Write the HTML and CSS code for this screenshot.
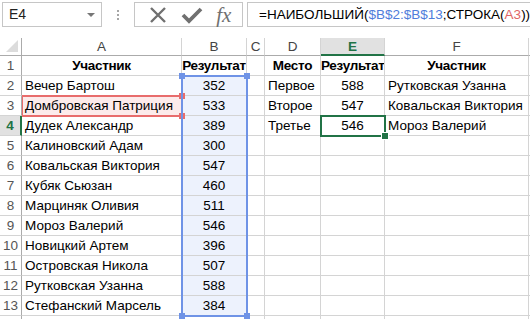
FILE: index.html
```html
<!DOCTYPE html>
<html lang="ru">
<head>
<meta charset="UTF-8">
<link rel="stylesheet" href="styles.css">
<title>Лист</title>
</head>
<body>
<div class="toolbar">
  <div class="namebox">E4<span class="arrow"></span></div>
  <div class="grip"><i></i><i></i><i></i></div>
  <div class="fbuttons">
    <svg width="20" height="20" viewBox="0 0 20 20"><path d="M3 3 L17 17 M17 3 L3 17" stroke="#707070" stroke-width="2.4" fill="none"/></svg>
    <svg width="22" height="20" viewBox="0 0 22 20"><path d="M2 10 L8 16 L20 4" stroke="#707070" stroke-width="3.8" fill="none"/></svg>
    <span class="fx">fx</span>
  </div>
  <div class="formula">=НАИБОЛЬШИЙ(<span class="ref-b">$B$2:$B$13</span>;СТРОКА(<span class="ref-r">A3</span>))</div>
</div>

<div class="sheet">
  <div class="corner"><span class="tri"></span></div>
  <div class="ch">A</div><div class="ch">B</div><div class="ch">C</div><div class="ch">D</div><div class="ch active">E</div><div class="ch">F</div><div class="ch"></div>

  <div class="rh">1</div><div class="c b ctr">Участник</div><div class="c b ctr">Результат</div><div class="c"></div><div class="c b ctr">Место</div><div class="c b ctr">Результат</div><div class="c b ctr">Участник</div><div class="c"></div>
  <div class="rh">2</div><div class="c">Вечер Бартош</div><div class="c ctr blue">352</div><div class="c"></div><div class="c">Первое</div><div class="c ctr">588</div><div class="c">Рутковская Узанна</div><div class="c"></div>
  <div class="rh">3</div><div class="c pink">Домбровская Патриция</div><div class="c ctr blue">533</div><div class="c"></div><div class="c">Второе</div><div class="c ctr">547</div><div class="c">Ковальская Виктория</div><div class="c"></div>
  <div class="rh active">4</div><div class="c">Дудек Александр</div><div class="c ctr blue">389</div><div class="c"></div><div class="c">Третье</div><div class="c ctr">546</div><div class="c">Мороз Валерий</div><div class="c"></div>
  <div class="rh">5</div><div class="c">Калиновский Адам</div><div class="c ctr blue">300</div><div class="c"></div><div class="c"></div><div class="c"></div><div class="c"></div><div class="c"></div>
  <div class="rh">6</div><div class="c">Ковальская Виктория</div><div class="c ctr blue">547</div><div class="c"></div><div class="c"></div><div class="c"></div><div class="c"></div><div class="c"></div>
  <div class="rh">7</div><div class="c">Кубяк Сьюзан</div><div class="c ctr blue">460</div><div class="c"></div><div class="c"></div><div class="c"></div><div class="c"></div><div class="c"></div>
  <div class="rh">8</div><div class="c">Марциняк Оливия</div><div class="c ctr blue">511</div><div class="c"></div><div class="c"></div><div class="c"></div><div class="c"></div><div class="c"></div>
  <div class="rh">9</div><div class="c">Мороз Валерий</div><div class="c ctr blue">546</div><div class="c"></div><div class="c"></div><div class="c"></div><div class="c"></div><div class="c"></div>
  <div class="rh">10</div><div class="c">Новицкий Артем</div><div class="c ctr blue">396</div><div class="c"></div><div class="c"></div><div class="c"></div><div class="c"></div><div class="c"></div>
  <div class="rh">11</div><div class="c">Островская Никола</div><div class="c ctr blue">507</div><div class="c"></div><div class="c"></div><div class="c"></div><div class="c"></div><div class="c"></div>
  <div class="rh">12</div><div class="c">Рутковская Узанна</div><div class="c ctr blue">588</div><div class="c"></div><div class="c"></div><div class="c"></div><div class="c"></div><div class="c"></div>
  <div class="rh">13</div><div class="c">Стефанский Марсель</div><div class="c ctr blue">384</div><div class="c"></div><div class="c"></div><div class="c"></div><div class="c"></div><div class="c"></div>
  <div class="rh last"></div><div class="c last"></div><div class="c last"></div><div class="c last"></div><div class="c last"></div><div class="c last"></div><div class="c last"></div><div class="c last"></div>

  <!-- выделения диапазонов -->
  <div class="sel-red"><i class="sq tr"></i><i class="sq br"></i></div>
  <div class="sel-blue"><i class="sq tl"></i><i class="sq tr"></i><i class="sq bl"></i><i class="sq br"></i></div>
  <div class="sel-green"><i class="handle"></i></div>
</div>
</body>
</html>
```

FILE: styles.css
```css
body {
    margin: 0;
    width: 530px;
    height: 319px;
    overflow: hidden;
    background: #fff;
    font-family: "Liberation Sans", Arial, sans-serif;
    color: #000;
}

.toolbar {
    display: flex;
    align-items: flex-start;
    height: 38px;
    padding-top: 2px;
    box-sizing: border-box;
}

.namebox {
    position: relative;
    flex-shrink: 0;
    margin-left: 2px;
    width: 100px;
    height: 25px;
    box-sizing: border-box;
    border: 1px solid #c6c6c6;
    font-size: 14px;
    line-height: 23px;
    padding-left: 6px;
    color: #222;
}
.arrow {
    position: absolute;
    right: 6px;
    top: 10px;
    border-left: 4px solid transparent;
    border-right: 4px solid transparent;
    border-top: 4px solid #777;
}

.grip {
    flex-shrink: 0;
    width: 32px;
    height: 25px;
    display: flex;
    flex-direction: column;
    align-items: center;
    justify-content: center;
    gap: 2px;
}
.grip i {
    width: 2px;
    height: 2px;
    background: #a6a6a6;
}

.fbuttons {
    flex-shrink: 0;
    width: 109px;
    height: 25px;
    box-sizing: border-box;
    border: 1px solid #c6c6c6;
    display: flex;
    align-items: center;
    justify-content: space-around;
    padding: 0 4px 0 6px;
}
.fx {
    font-family: "Liberation Serif", serif;
    font-style: italic;
    font-size: 21px;
    color: #707070;
    line-height: 22px;
}

.formula {
    margin-left: 4px;
    flex: 1;
    min-width: 0;
    height: 25px;
    box-sizing: border-box;
    border: 1px solid #c6c6c6;
    border-right: none;
    font-size: 13.5px;
    line-height: 23px;
    padding-left: 11px;
    white-space: nowrap;
    overflow: hidden;
}
.ref-b { color: #4f7ddb; }
.ref-r { color: #e06666; }

.sheet {
    position: relative;
    display: grid;
    grid-template-columns: 22px 160px 65px 18px 56px 64px 144px 1fr;
    grid-template-rows: 18px repeat(13, 20px) 3px;
}

.corner, .ch, .rh, .c {
    box-sizing: border-box;
    border-right: 1px solid #d4d4d4;
    border-bottom: 1px solid #d4d4d4;
}
.last { border-bottom: none; }
.corner {
    position: relative;
    border-right-color: #ababab;
    border-bottom-color: #ababab;
}
.tri {
    position: absolute;
    right: 3px;
    bottom: 3px;
    border-left: 12px solid transparent;
    border-bottom: 12px solid #dcdcdc;
}
.ch {
    text-align: center;
    font-size: 13.5px;
    line-height: 17px;
    color: #444;
    border-bottom-color: #ababab;
}
.ch.active {
    background: #e1e1e1;
    color: #217346;
    font-weight: bold;
    border-bottom: 2px solid #217346;
}
.rh {
    text-align: center;
    font-size: 13.5px;
    line-height: 19px;
    color: #555;
    border-right-color: #ababab;
}
.rh.active {
    background: #e1e1e1;
    color: #217346;
    font-weight: bold;
    border-right: 2px solid #217346;
}
.c {
    font-size: 13.5px;
    line-height: 19px;
    padding: 0 3px;
    white-space: nowrap;
    overflow: hidden;
}
.b { font-weight: bold; letter-spacing: -0.3px; }
.ctr { text-align: center; padding: 0; }
.blue { background: #edf2fd; }
.pink { background: #fcebeb; }

.sel-red, .sel-blue, .sel-green {
    position: absolute;
    box-sizing: border-box;
    pointer-events: none;
}
.sel-red {
    left: 22px;
    top: 57px;
    width: 161px;
    height: 22px;
    border: 2px solid #e86c6c;
    border-left-width: 1px;
}
.sel-blue {
    left: 181px;
    top: 37px;
    width: 67px;
    height: 242px;
    border: 2px solid #6f93e6;
}
.sel-green {
    left: 320px;
    top: 77px;
    width: 66px;
    height: 22px;
    border: 2px solid #217346;
}
.sq {
    position: absolute;
    width: 6px;
    height: 6px;
}
.sel-red .sq { background: #e86c6c; }
.sel-blue .sq { background: #6f93e6; }
.tl { left: -4px; top: -4px; }
.tr { right: -4px; top: -4px; }
.bl { left: -4px; bottom: -4px; }
.br { right: -4px; bottom: -4px; }
.handle {
    position: absolute;
    right: -5px;
    bottom: -5px;
    width: 6px;
    height: 6px;
    background: #217346;
    border: 1px solid #fff;
}
```
